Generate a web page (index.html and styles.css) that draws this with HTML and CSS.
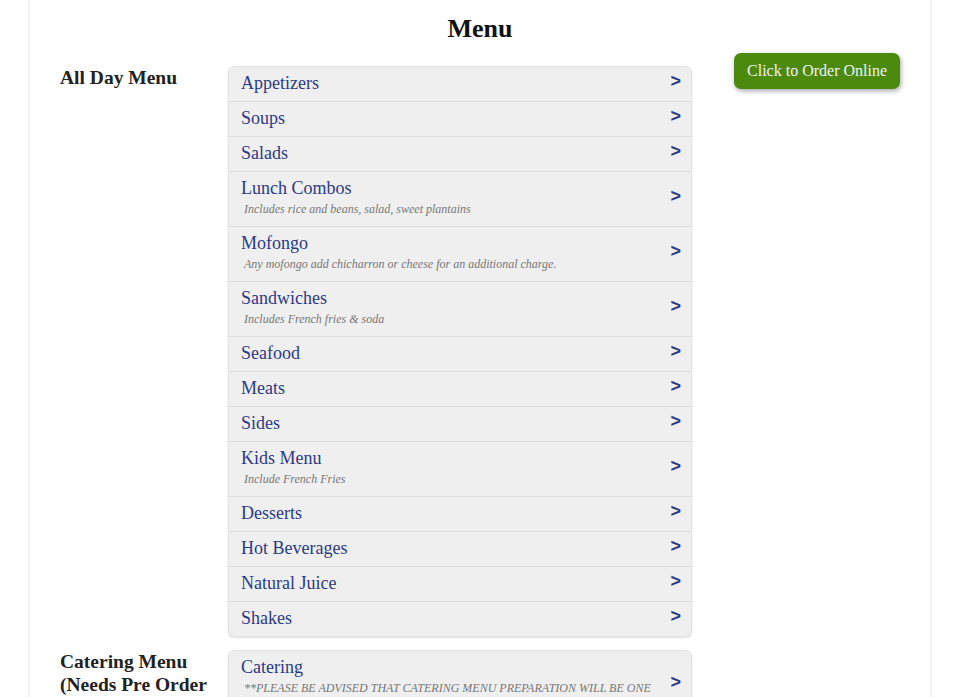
FILE: index.html
```html
<!DOCTYPE html>
<html>
<head>
<meta charset="utf-8">
<link rel="stylesheet" href="styles.css">
</head>
<body>
<div class="page">
  <h1 class="title">Menu</h1>
  <section class="menu-section">
    <h2 class="section-label">All Day Menu</h2>
    <ul class="cat-list">
      <li class="cat"><div class="cat-text"><span class="cat-name">Appetizers</span></div><span class="arrow">&gt;</span></li>
      <li class="cat"><div class="cat-text"><span class="cat-name">Soups</span></div><span class="arrow">&gt;</span></li>
      <li class="cat"><div class="cat-text"><span class="cat-name">Salads</span></div><span class="arrow">&gt;</span></li>
      <li class="cat"><div class="cat-text"><span class="cat-name">Lunch Combos</span><span class="cat-desc">Includes rice and beans, salad, sweet plantains</span></div><span class="arrow">&gt;</span></li>
      <li class="cat"><div class="cat-text"><span class="cat-name">Mofongo</span><span class="cat-desc">Any mofongo add chicharron or cheese for an additional charge.</span></div><span class="arrow">&gt;</span></li>
      <li class="cat"><div class="cat-text"><span class="cat-name">Sandwiches</span><span class="cat-desc">Includes French fries &amp; soda</span></div><span class="arrow">&gt;</span></li>
      <li class="cat"><div class="cat-text"><span class="cat-name">Seafood</span></div><span class="arrow">&gt;</span></li>
      <li class="cat"><div class="cat-text"><span class="cat-name">Meats</span></div><span class="arrow">&gt;</span></li>
      <li class="cat"><div class="cat-text"><span class="cat-name">Sides</span></div><span class="arrow">&gt;</span></li>
      <li class="cat"><div class="cat-text"><span class="cat-name">Kids Menu</span><span class="cat-desc">Include French Fries</span></div><span class="arrow">&gt;</span></li>
      <li class="cat"><div class="cat-text"><span class="cat-name">Desserts</span></div><span class="arrow">&gt;</span></li>
      <li class="cat"><div class="cat-text"><span class="cat-name">Hot Beverages</span></div><span class="arrow">&gt;</span></li>
      <li class="cat"><div class="cat-text"><span class="cat-name">Natural Juice</span></div><span class="arrow">&gt;</span></li>
      <li class="cat"><div class="cat-text"><span class="cat-name">Shakes</span></div><span class="arrow">&gt;</span></li>
    </ul>
    <div class="order-col"><a class="order-btn" href="#">Click to Order Online</a></div>
  </section>
  <section class="menu-section">
    <h2 class="section-label">Catering Menu (Needs Pre Order 24 Hours)</h2>
    <ul class="cat-list">
      <li class="cat"><div class="cat-text"><span class="cat-name">Catering</span><span class="cat-desc">**PLEASE BE ADVISED THAT CATERING MENU PREPARATION WILL BE ONE DAY IN ADVANCE.**</span></div><span class="arrow">&gt;</span></li>
    </ul>
    <div class="order-col"></div>
  </section>
</div>
</body>
</html>
```
FILE: styles.css
```css
* { box-sizing: border-box; }
html, body { margin: 0; padding: 0; background: #fff; }
body {
  font-family: "Liberation Serif", "Times New Roman", serif;
  color: #222;
}
.page {
  margin: 0 28px;
  border-left: 2px solid #f3f3f3;
  border-right: 2px solid #f3f3f3;
  padding: 0 30px 40px;
  min-height: 697px;
}
.title {
  margin: 0;
  padding-top: 13px;
  font-size: 26px;
  line-height: 32px;
  font-weight: bold;
  text-align: center;
  color: #111;
}
.menu-section {
  display: grid;
  grid-template-columns: 168px 464px 1fr;
  align-items: start;
  margin-top: 8px;
}
.menu-section + .menu-section { margin-top: 0; }
.section-label {
  margin: 13px 0 0;
  padding-right: 8px;
  font-size: 19.5px;
  line-height: 23px;
  font-weight: bold;
  color: #222;
}
.cat-list {
  list-style: none;
  margin: 13px 0 0;
  padding: 0;
  background: #efefef;
  border: 1px solid #e2e2e2;
  border-radius: 6px;
  box-shadow: 0 1px 2px rgba(0,0,0,0.12);
}
.cat {
  display: flex;
  align-items: center;
  padding: 5px 10px 7px 12px;
  border-top: 1px solid #dcdcdc;
}
.cat:first-child { border-top: none; }
.cat-text {
  flex: 1;
  display: flex;
  flex-direction: column;
  min-width: 0;
}
.cat-name {
  font-size: 18px;
  line-height: 22px;
  color: #2b3a86;
}
.cat-desc {
  margin-left: 3px;
  padding: 3px 10px 3px 0;
  font-size: 12px;
  line-height: 14px;
  font-style: italic;
  color: #777;
}
.arrow {
  font-family: "Liberation Sans", Arial, sans-serif;
  font-weight: bold;
  font-size: 18px;
  line-height: 14px;
  color: #2b3a86;
  margin-bottom: 4px;
}
.order-col {
  display: flex;
  justify-content: flex-end;
}
.order-btn {
  display: inline-block;
  padding: 8px 13px;
  font-size: 16px;
  line-height: 20px;
  color: #f2f2f2;
  background: #4b8a0d;
  border-radius: 7px;
  text-decoration: none;
  box-shadow: 1px 2px 5px rgba(0,0,0,0.35);
}
```
